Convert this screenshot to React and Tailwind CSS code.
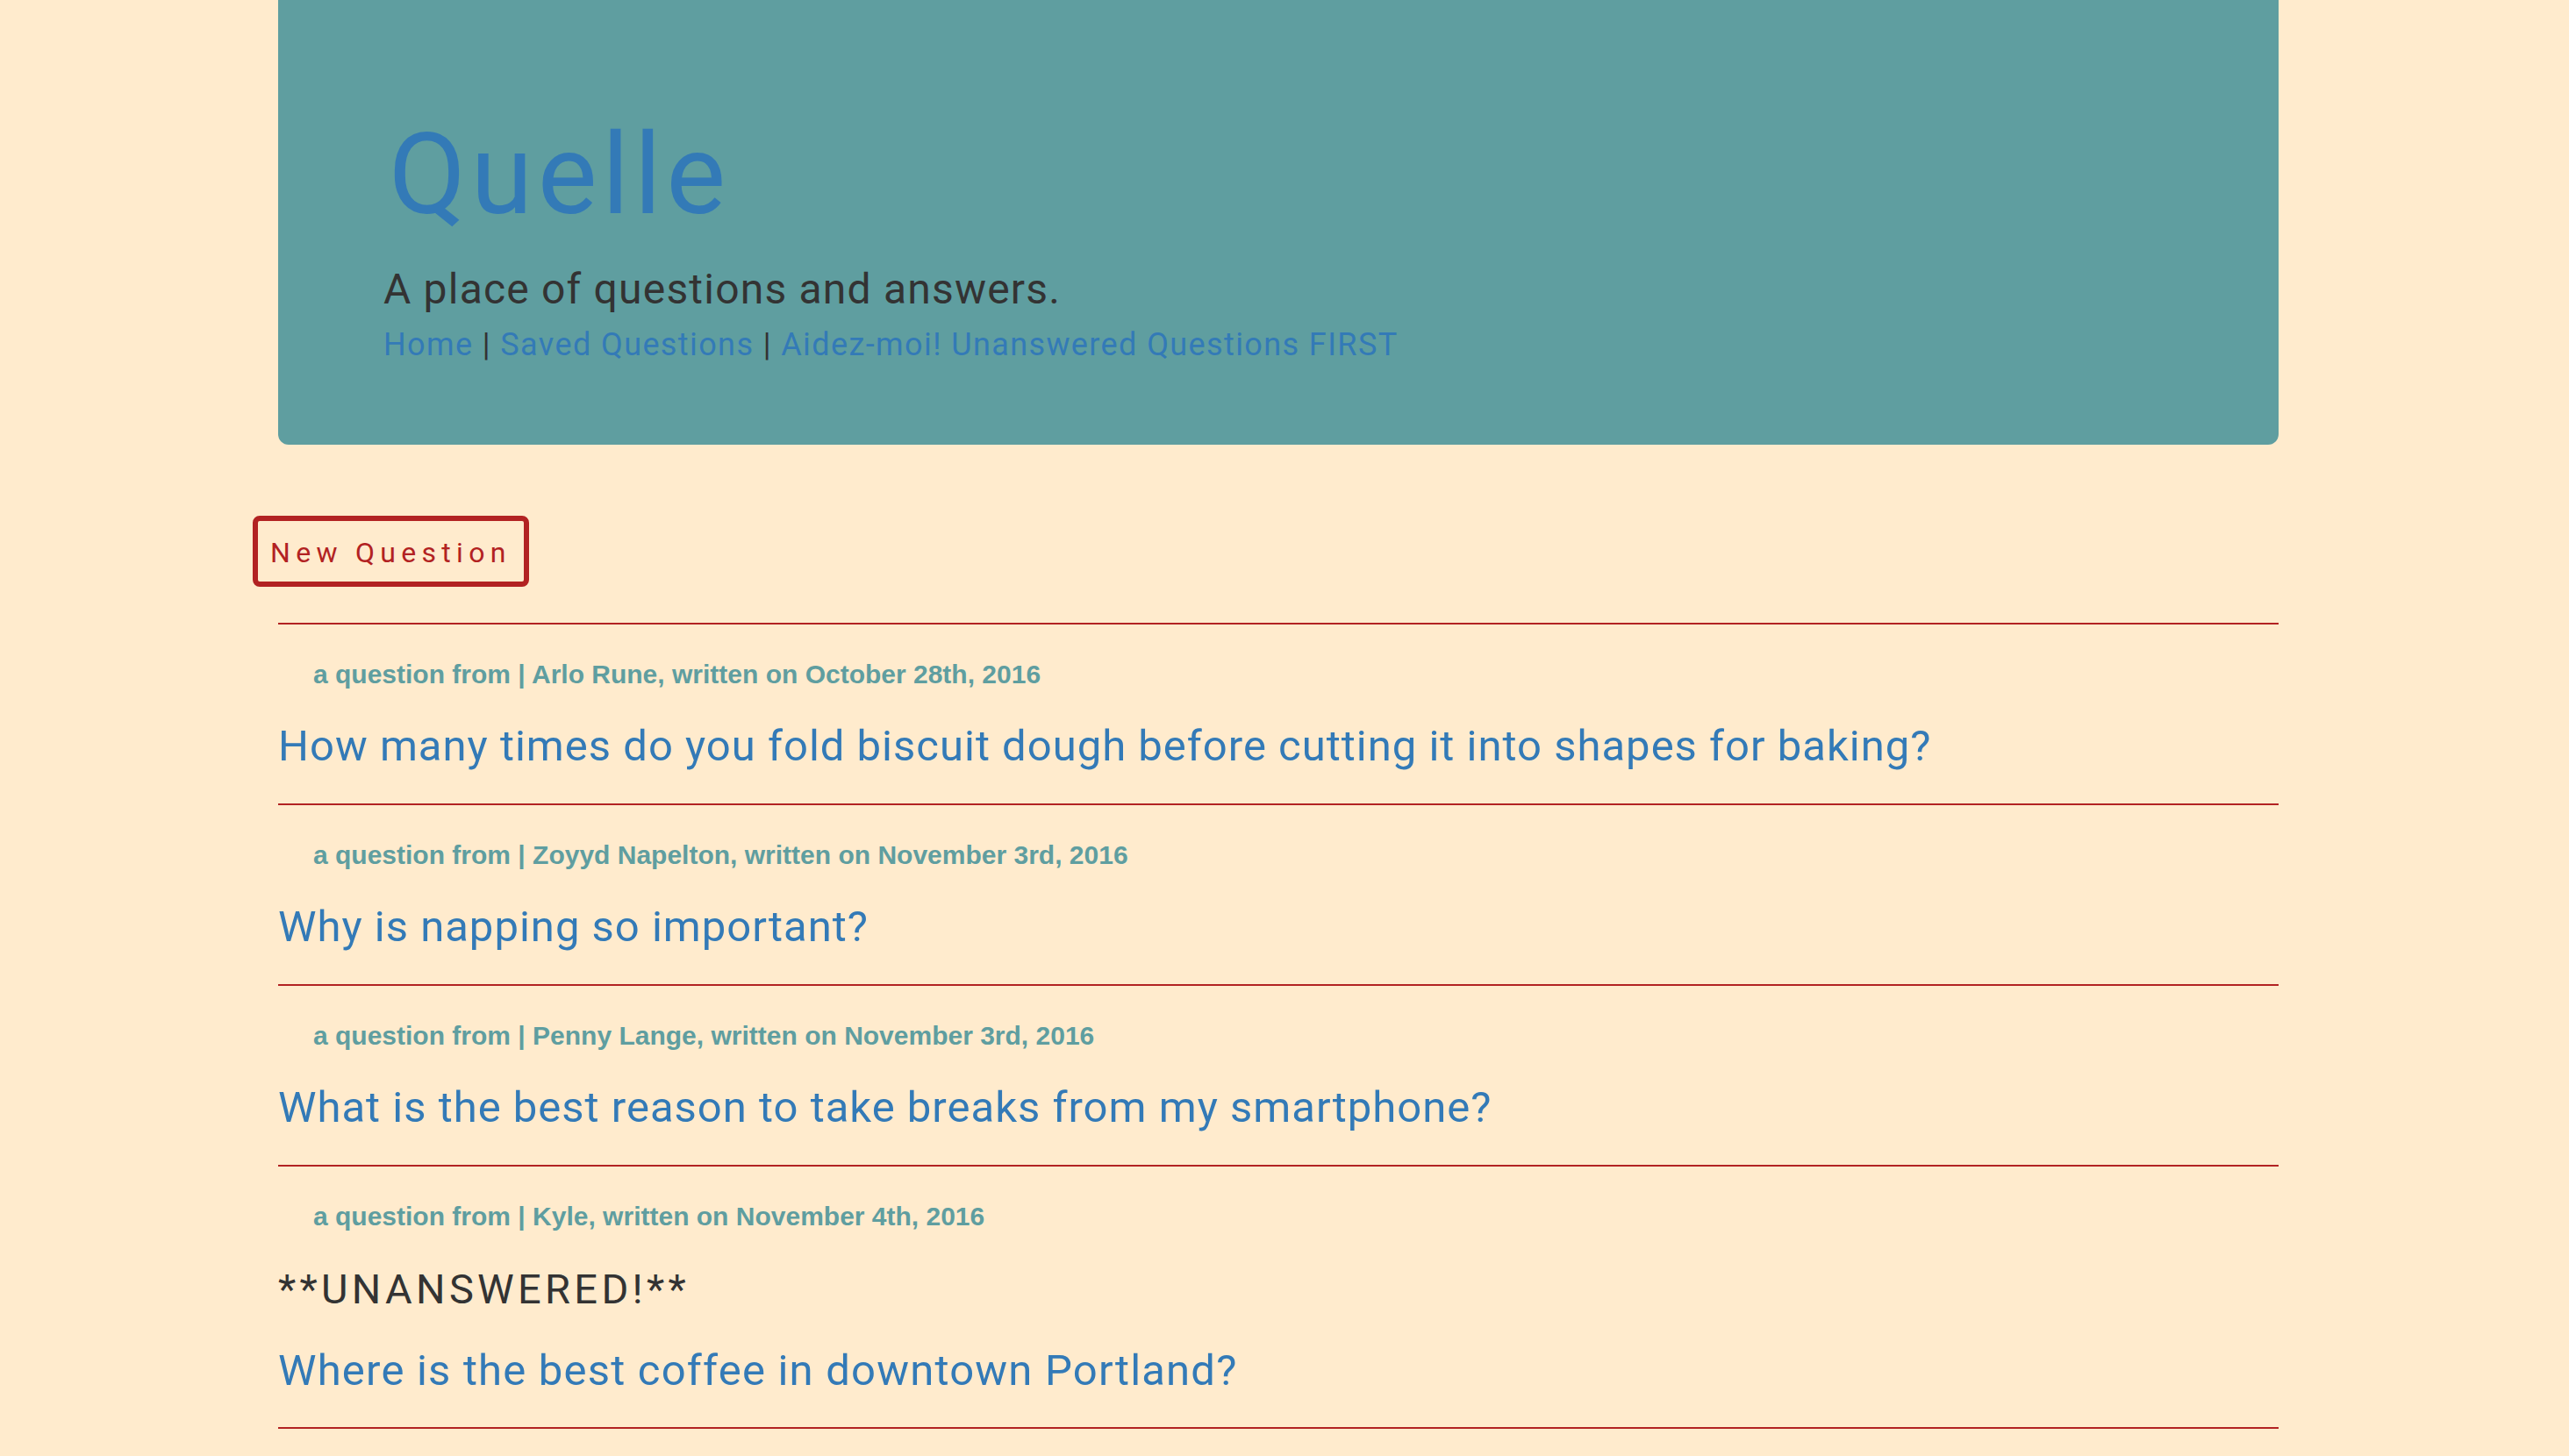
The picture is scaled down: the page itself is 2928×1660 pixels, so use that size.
import React from "react";

const questions = [
  { author: "Arlo Rune", date: "October 28th, 2016", title: "How many times do you fold biscuit dough before cutting it into shapes for baking?", unanswered: false },
  { author: "Zoyyd Napelton", date: "November 3rd, 2016", title: "Why is napping so important?", unanswered: false },
  { author: "Penny Lange", date: "November 3rd, 2016", title: "What is the best reason to take breaks from my smartphone?", unanswered: false },
  { author: "Kyle", date: "November 4th, 2016", title: "Where is the best coffee in downtown Portland?", unanswered: true },
];

const heading = { fontFamily: "Roboto, 'Noto Sans', sans-serif" };
const meta = { fontFamily: "'Liberation Sans', Arial, sans-serif" };

export default function App() {
  return (
    <div className="min-h-screen w-full bg-[#ffebcd]" style={heading}>
      <div className="w-[2280px] ml-[317px]">
        <div className="bg-[#5f9ea0] rounded-b-[12px] pl-[120px] pr-[120px] pt-[135px] pb-[96px]">
          <h1 className="ml-[6px] text-[128px] leading-[128px] tracking-[5.5px] text-[#337ab7] font-normal">Quelle</h1>
          <p className="mt-[43px] text-[48px] leading-[48px] tracking-[1.2px] text-[#333333]">A place of questions and answers.</p>
          <div className="mt-[21px] text-[36px] leading-[36px] tracking-[1.4px] text-[#333333]">
            <a className="text-[#337ab7]">Home</a>
            {" | "}
            <a className="text-[#337ab7]">Saved Questions</a>
            {" | "}
            <a className="text-[#337ab7]">Aidez-moi! Unanswered Questions FIRST</a>
          </div>
        </div>

        <div className="mt-[81px] -ml-[29px] flex">
          <button className="border-[6px] border-[#b22222] rounded-[8px] pl-[14px] pr-[14px] pt-[20px] pb-[17px] text-[32px] leading-[32px] tracking-[6.3px] text-[#b22222] bg-transparent">
            New Question
          </button>
        </div>

        <div className="mt-[41px]">
          {questions.map((q, i) => (
            <div key={i}>
              <div className="h-[2px] bg-[#b22222]" />
              <div className={q.unanswered ? "pt-[42px] pb-[40px]" : "pt-[42px] pb-[41px]"}>
                <div className="pl-[40px] text-[30px] leading-[30px] font-bold text-[#5f9ea0]" style={meta}>
                  a question from | {q.author}, written on {q.date}
                </div>
                {q.unanswered && (
                  <div className="mt-[44px] text-[47px] leading-[47px] tracking-[4.3px] text-[#333333]">**UNANSWERED!**</div>
                )}
                <div className={(q.unanswered ? "mt-[45px] tracking-[1.2px]" : "mt-[42px] tracking-[1px]") + " text-[49px] leading-[49px] text-[#337ab7]"}>
                  <a>{q.title}</a>
                </div>
              </div>
            </div>
          ))}
          <div className="h-[2px] bg-[#b22222]" />
        </div>
      </div>
    </div>
  );
}
